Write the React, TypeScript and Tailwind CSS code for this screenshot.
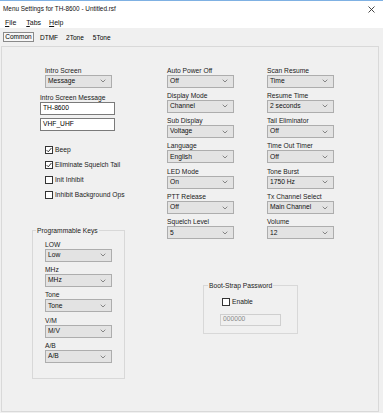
import React from "react";

const Chevron = () => (
  <svg width="6" height="4" viewBox="0 0 6 4" className="shrink-0">
    <path d="M0.7 0.7 L3 3 L5.3 0.7" fill="none" stroke="#7a7a7a" strokeWidth="0.9" />
  </svg>
);

const Sel = ({ value }: { value: string }) => (
  <div className="flex h-[13px] w-[67px] items-center justify-between border border-[#adadad] bg-[#e3e3e3] pl-[2px] pr-[5px]">
    <span className="leading-none text-[#111]">{value}</span>
    <Chevron />
  </div>
);

const Field = ({ label, value }: { label: string; value: string }) => (
  <div className="mb-[3.33px] flex flex-col">
    <div className="h-[9px] leading-[9px] text-[#1a1a1a] whitespace-nowrap">{label}</div>
    <Sel value={value} />
  </div>
);

const Check = ({ checked, label }: { checked?: boolean; label: string }) => (
  <div className="flex h-[15px] items-center gap-[2px]">
    <div className="flex h-[8px] w-[8px] items-center justify-center border border-[#333] bg-white">
      {checked && (
        <svg width="6" height="6" viewBox="0 0 6 6">
          <path d="M0.6 3.1 L2.3 4.8 L5.4 1" fill="none" stroke="#222" strokeWidth="0.9" />
        </svg>
      )}
    </div>
    <span className="leading-none text-[#1a1a1a] whitespace-nowrap">{label}</span>
  </div>
);

export default function App() {
  return (
    <div className="flex h-[413px] w-[383px] flex-col overflow-hidden bg-[#f0f0f0] font-['Liberation_Sans',Arial,sans-serif] text-[6.7px] text-black">
      {/* Title bar */}
      <div className="flex h-[17px] shrink-0 items-center justify-between border-t border-[#7fb1e3] bg-white pl-[3px] pr-[8px]">
        <span className="text-[6.4px] leading-none text-[#111]">Menu Settings for TH-8600 - Untitled.rsf</span>
        <svg width="7" height="7" viewBox="0 0 7 7">
          <path d="M0.5 0.5 L6.5 6.5 M6.5 0.5 L0.5 6.5" stroke="#333" strokeWidth="0.9" />
        </svg>
      </div>
      {/* Menu bar */}
      <div className="flex h-[11px] shrink-0 items-center bg-white pl-[5px] text-[7px] leading-none text-[#111]">
        <span className="mr-[10px]"><span className="underline">F</span>ile</span>
        <span className="mr-[8px]"><span className="underline">T</span>abs</span>
        <span><span className="underline">H</span>elp</span>
      </div>
      {/* Tab strip */}
      <div className="flex h-[18px] shrink-0 items-start pl-[3px] pt-[4px] text-[6.5px] leading-none">
        <div className="flex h-[10px] w-[31px] items-center justify-center border border-[#8a8a8a] bg-[#f7f7f7]">Common</div>
        <span className="ml-[6px] mt-[2.5px]">DTMF</span>
        <span className="ml-[8px] mt-[2.5px]">2Tone</span>
        <span className="ml-[9px] mt-[2.5px]">5Tone</span>
      </div>
      {/* Page */}
      <div className="mb-[1px] ml-[1px] mr-[4px] flex flex-1 border border-[#d9d9d9] bg-[#f0f0f0] pl-[30px] pt-[18.5px]">
        {/* Left column */}
        <div className="flex w-[94px] flex-col">
          <div className="ml-[13px]">
            <Field label="Intro Screen" value="Message" />
          </div>
          <div className="ml-[8px] mt-[3px] h-[8px] leading-[8px] text-[#1a1a1a] whitespace-nowrap">Intro Screen Message</div>
          <div className="ml-[8px] flex h-[13px] w-[75px] items-center border border-[#7a7a7a] bg-white pl-[2px] leading-none">TH-8600</div>
          <div className="ml-[8px] mt-[3px] flex h-[13px] w-[75px] items-center border border-[#7a7a7a] bg-white pl-[2px] leading-none">VHF_UHF</div>
          <div className="ml-[13px] mt-[12px] flex flex-col">
            <Check checked label="Beep" />
            <Check checked label="Eliminate Squelch Tail" />
            <Check label="Init Inhibit" />
            <Check label="Inhibit Background Ops" />
          </div>
          <div className="relative mt-[27.5px] h-[149px] w-[93px] border border-[#d8d8d8] pl-[12px] pt-[8.5px]">
            <span className="absolute left-[3px] top-[-5px] bg-[#f0f0f0] px-[1px] leading-[9px] text-[#1a1a1a] whitespace-nowrap">Programmable Keys</span>
            <Field label="LOW" value="Low" />
            <Field label="MHz" value="MHz" />
            <Field label="Tone" value="Tone" />
            <Field label="V/M" value="M/V" />
            <Field label="A/B" value="A/B" />
          </div>
        </div>
        {/* Right area */}
        <div className="ml-[41px] flex flex-col">
          <div className="flex gap-[33px]">
            <div className="flex w-[67px] flex-col">
              <Field label="Auto Power Off" value="Off" />
              <Field label="Display Mode" value="Channel" />
              <Field label="Sub Display" value="Voltage" />
              <Field label="Language" value="English" />
              <Field label="LED Mode" value="On" />
              <Field label="PTT Release" value="Off" />
              <Field label="Squelch Level" value="5" />
            </div>
            <div className="flex w-[67px] flex-col">
              <Field label="Scan Resume" value="Time" />
              <Field label="Resume Time" value="2 seconds" />
              <Field label="Tail Eliminator" value="Off" />
              <Field label="Time Out Timer" value="Off" />
              <Field label="Tone Burst" value="1750 Hz" />
              <Field label="Tx Channel Select" value="Main Channel" />
              <Field label="Volume" value="12" />
            </div>
          </div>
          <div className="relative ml-[36px] mt-[42px] h-[49px] w-[95px] border border-[#d8d8d8] pl-[18px] pt-[11.5px]">
            <span className="absolute left-[4px] top-[-5px] bg-[#f0f0f0] px-[1px] leading-[9px] text-[#1a1a1a] whitespace-nowrap">Boot-Strap Password</span>
            <div className="flex h-[10px] items-center gap-[2px]">
              <div className="h-[8px] w-[8px] border border-[#333] bg-white" />
              <span className="leading-none text-[#1a1a1a]">Enable</span>
            </div>
            <div className="-ml-[2px] mt-[6.5px] flex h-[12px] w-[61px] items-center border border-[#cfcfcf] bg-[#f0f0f0] pl-[2px] leading-none text-[#8a8a8a]">000000</div>
          </div>
        </div>
      </div>
    </div>
  );
}
